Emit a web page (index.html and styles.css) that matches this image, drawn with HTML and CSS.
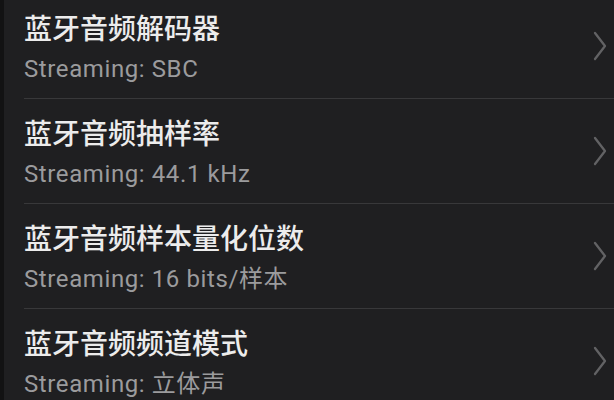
FILE: index.html
```html
<!DOCTYPE html>
<html lang="zh-CN">
<head>
<meta charset="utf-8">
<title>蓝牙音频</title>
<link rel="stylesheet" href="styles.css">
</head>
<body>
<div class="screen">
  <div class="edge"></div>
  <ul class="settings">
    <li class="item">
      <div class="text">
        <div class="title">蓝牙音频解码器</div>
        <div class="value">Streaming: SBC</div>
      </div>
      <svg class="chev" viewBox="0 0 14 30" width="14" height="30"><path d="M2 2 L12 15 L2 28" /></svg>
    </li>
    <li class="item">
      <div class="text">
        <div class="title">蓝牙音频抽样率</div>
        <div class="value">Streaming: 44.1 kHz</div>
      </div>
      <svg class="chev" viewBox="0 0 14 30" width="14" height="30"><path d="M2 2 L12 15 L2 28" /></svg>
    </li>
    <li class="item">
      <div class="text">
        <div class="title">蓝牙音频样本量化位数</div>
        <div class="value">Streaming: 16 bits/样本</div>
      </div>
      <svg class="chev" viewBox="0 0 14 30" width="14" height="30"><path d="M2 2 L12 15 L2 28" /></svg>
    </li>
    <li class="item">
      <div class="text">
        <div class="title">蓝牙音频频道模式</div>
        <div class="value">Streaming: 立体声</div>
      </div>
      <svg class="chev" viewBox="0 0 14 30" width="14" height="30"><path d="M2 2 L12 15 L2 28" /></svg>
    </li>
  </ul>
</div>
</body>
</html>
```
FILE: styles.css
```css
html, body {
  margin: 0;
  padding: 0;
  height: 100%;
  background: #1f1f21;
  overflow: hidden;
}

.screen {
  display: flex;
  height: 100%;
  font-family: Roboto, "Noto Sans CJK SC", sans-serif;
}

.edge {
  width: 4px;
  flex: none;
  background: #121213;
}

/* list is scrolled a few pixels, so the first row starts above the top */
.settings {
  flex: 1;
  list-style: none;
  margin: -6px 0 0 0;
  padding: 0 0 0 20px;
}

.item {
  display: flex;
  align-items: center;
  height: 104px;
  border-bottom: 1px solid #38383a;
  box-sizing: content-box;
}

.text {
  flex: 1;
  display: flex;
  flex-direction: column;
  gap: 7px;
}

.title {
  font-family: "Noto Sans CJK SC", sans-serif;
  font-size: 28px;
  line-height: 38px;
  font-weight: 500;
  color: #ececec;
}

.value {
  font-family: Roboto, "Noto Sans CJK SC", sans-serif;
  font-size: 24px;
  line-height: 32px;
  letter-spacing: 0.6px;
  color: #9b9b9d;
}

.chev {
  flex: none;
  margin-right: 7px;
  fill: none;
  stroke: #626264;
  stroke-width: 2.3;
  stroke-linecap: round;
  stroke-linejoin: round;
}
```
